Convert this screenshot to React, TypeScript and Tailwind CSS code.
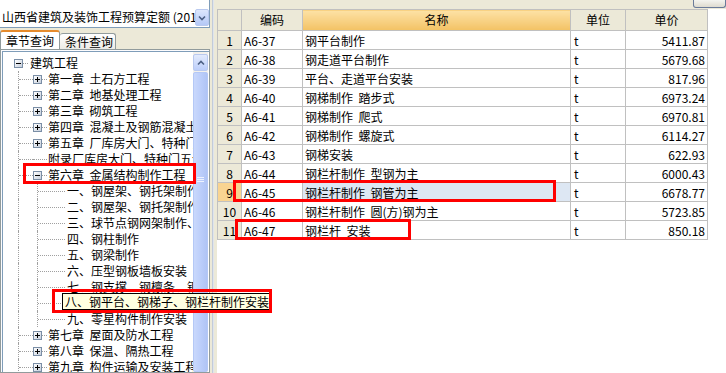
import React from "react";

const FONT = { fontFamily: '"Noto Sans CJK SC", "Liberation Sans", sans-serif' };

type TreeRow = { level: 0 | 1 | 2; text: string; box?: "plus" | "minus" };

const tree: TreeRow[] = [
  { level: 0, text: "建筑工程", box: "minus" },
  { level: 1, text: "第一章  土石方工程", box: "plus" },
  { level: 1, text: "第二章  地基处理工程", box: "plus" },
  { level: 1, text: "第三章  砌筑工程", box: "plus" },
  { level: 1, text: "第四章  混凝土及钢筋混凝土工程", box: "plus" },
  { level: 1, text: "第五章  厂库房大门、特种门、木结构工程", box: "plus" },
  { level: 1, text: "附录厂库房大门、特种门五金" },
  { level: 1, text: "第六章  金属结构制作工程", box: "minus" },
  { level: 2, text: "一、钢屋架、钢托架制作" },
  { level: 2, text: "二、钢屋架、钢托架制作" },
  { level: 2, text: "三、球节点钢网架制作、安装" },
  { level: 2, text: "四、钢柱制作" },
  { level: 2, text: "五、钢梁制作" },
  { level: 2, text: "六、压型钢板墙板安装" },
  { level: 2, text: "七、钢支撑、钢檩条、钢墙架" },
  { level: 2, text: "八、钢平台、钢梯子、钢栏杆制作安装" },
  { level: 2, text: "九、零星构件制作安装" },
  { level: 1, text: "第七章  屋面及防水工程", box: "plus" },
  { level: 1, text: "第八章  保温、隔热工程", box: "plus" },
  { level: 1, text: "第九章  构件运输及安装工程", box: "plus" },
];

const rows = [
  ["A6-37", "钢平台制作", "t", "5411.87"],
  ["A6-38", "钢走道平台制作", "t", "5679.68"],
  ["A6-39", "平台、走道平台安装", "t", "817.96"],
  ["A6-40", "钢梯制作  踏步式", "t", "6973.24"],
  ["A6-41", "钢梯制作  爬式", "t", "6970.81"],
  ["A6-42", "钢梯制作  螺旋式", "t", "6114.27"],
  ["A6-43", "钢梯安装", "t", "622.93"],
  ["A6-44", "钢栏杆制作  型钢为主", "t", "6000.43"],
  ["A6-45", "钢栏杆制作  钢管为主", "t", "6678.77"],
  ["A6-46", "钢栏杆制作  圆(方)钢为主", "t", "5723.85"],
  ["A6-47", "钢栏杆  安装", "t", "850.18"],
];

function Box({ kind }: { kind: "plus" | "minus" }) {
  return (
    <div className="w-[9px] h-[9px] shrink-0 border border-[#7a8ea6] bg-gradient-to-br from-white to-[#c6cfdc] flex items-center justify-center relative">
      <div className="w-[5px] h-px bg-black" />
      {kind === "plus" && <div className="absolute w-px h-[5px] bg-black" />}
    </div>
  );
}

function Dots({ w }: { w: number }) {
  return <div className="border-t border-dotted border-[#a0a0a0] shrink-0" style={{ width: w }} />;
}

function TreeLine({ row }: { row: TreeRow }) {
  if (row.level === 0) {
    return (
      <div className="h-[16px] flex items-center">
        <div className="w-[11px] shrink-0" />
        <Box kind={row.box!} />
        <Dots w={5} />
        <span className="ml-[2px] whitespace-pre">{row.text}</span>
      </div>
    );
  }
  if (row.level === 1) {
    return (
      <div className="h-[16px] flex items-center">
        <div className="w-[15px] shrink-0" />
        <div className="w-[15px] h-full shrink-0 border-l border-dotted border-[#a0a0a0] flex items-center">
          <Dots w={14} />
        </div>
        {row.box ? (
          <>
            <Box kind={row.box} />
            <Dots w={5} />
          </>
        ) : (
          <Dots w={14} />
        )}
        <span className="ml-[1px] whitespace-pre">{row.text}</span>
      </div>
    );
  }
  return (
    <div className="h-[16px] flex items-center">
      <div className="w-[15px] shrink-0" />
      <div className="w-[19px] h-full shrink-0 border-l border-dotted border-[#a0a0a0]" />
      <div className="w-[28px] h-full shrink-0 border-l border-dotted border-[#a0a0a0] flex items-center">
        <Dots w={27} />
      </div>
      <span className="ml-[2px] whitespace-pre">{row.text}</span>
    </div>
  );
}

export default function App() {
  return (
    <div className="w-[726px] h-[373px] relative overflow-hidden bg-[#ece9d8] text-[12px] text-black flex" style={FONT}>
      {/* left: chapter tree */}
      <div className="w-[210px] shrink-0 flex flex-col">
        <div className="h-[28px] bg-white border-b border-r border-[#7f9db9] flex items-end pb-[2px] pl-[2px] relative">
          <span className="whitespace-pre text-[12px] leading-[16px]">山西省建筑及装饰工程预算定额 (201</span>
          <div className="absolute right-[0px] top-[9px] w-[14px] h-[17px] rounded-[2px] border border-[#b9c9ef] bg-gradient-to-b from-[#dde7fd] to-[#b4c8f6] flex items-center justify-center">
            <svg width="8" height="6" viewBox="0 0 8 6">
              <path d="M1 1.5 L4 4.5 L7 1.5" stroke="#4d6185" strokeWidth="1.6" fill="none" />
            </svg>
          </div>
        </div>
        <div className="h-[21px] flex items-end pt-[2px]">
          <div className="h-[19px] w-[60px] bg-white border border-b-0 border-[#919b9c] border-t-2 border-t-[#e68b2c] rounded-t-[3px] flex items-center pl-[5px] text-[12px]">
            章节查询
          </div>
          <div className="h-[16px] w-[56px] bg-gradient-to-b from-white to-[#ecebe6] border border-b-0 border-l-0 border-[#919b9c] rounded-t-[3px] flex items-center pl-[5px]">
            条件查询
          </div>
        </div>
        <div className="flex-1 bg-[#fcfcfe] border border-[#919b9c] flex min-h-0">
          <div className="flex-1 bg-white ml-[1px] mt-[1px] border-l border-t border-[#7f9db9] flex min-h-0">
            <div className="w-[190px] overflow-hidden pt-[3px]">
              {tree.map((r, i) => (
                <TreeLine key={i} row={r} />
              ))}
            </div>
            <div className="w-[15px] shrink-0 flex flex-col bg-[#f3f1ec]">
              <div className="h-[17px] mt-[2px] rounded-[2px] border border-[#b9c9ef] bg-gradient-to-b from-[#e3ebfd] to-[#bccefa] flex items-center justify-center">
                <svg width="8" height="6" viewBox="0 0 8 6">
                  <path d="M1 4.5 L4 1.5 L7 4.5" stroke="#4d6185" strokeWidth="1.6" fill="none" />
                </svg>
              </div>
              <div className="flex-1 mt-px rounded-[2px] border border-[#b4c8f6] bg-gradient-to-r from-[#c9d8fc] via-[#bccefa] to-[#b0c4f5] flex flex-col items-center pt-[104px]">
                <div className="w-[7px] h-px bg-[#eef3fe] mb-[1px]" />
                <div className="w-[7px] h-px bg-[#eef3fe] mb-[1px]" />
                <div className="w-[7px] h-px bg-[#eef3fe]" />
              </div>
            </div>
          </div>
        </div>
      </div>

      {/* splitter */}
      <div className="w-[7px] shrink-0 flex">
        <div className="w-px bg-[#c2cbd9] ml-[2px]" />
        <div className="w-px bg-[#dfe4ec]" />
      </div>

      {/* right: quota table */}
      <div className="flex-1 flex flex-col">
        <div className="h-[9px] flex justify-end">
          <div className="w-[33px] h-[8px] border border-t-0 border-[#6a7b9a] rounded-b-[3px] bg-gradient-to-b from-[#f4f4f0] to-[#dedbcf]" />
        </div>
        <div className="flex-1 bg-white">
          <table className="border-collapse table-fixed" style={{ width: 490 }}>
            <colgroup>
              <col style={{ width: 24 }} />
              <col style={{ width: 61 }} />
              <col style={{ width: 268 }} />
              <col style={{ width: 55 }} />
              <col style={{ width: 82 }} />
            </colgroup>
            <thead>
              <tr className="h-[21px]">
                <th className="border border-[#c0c0c0] bg-[#ece9d8] font-normal" />
                <th className="border border-[#c0c0c0] bg-[#ece9d8] font-normal text-center">编码</th>
                <th className="border border-[#c0c0c0] bg-gradient-to-b from-[#fde2a5] to-[#f3c263] font-normal text-center">名称</th>
                <th className="border border-[#c0c0c0] bg-[#ece9d8] font-normal text-center">单位</th>
                <th className="border border-[#c0c0c0] bg-[#ece9d8] font-normal text-center">单价</th>
              </tr>
            </thead>
            <tbody>
              {rows.map((r, i) => {
                const sel = i === 8;
                return (
                  <tr key={i} className="h-[19px] leading-[17px]">
                    <td className={"border border-[#c0c0c0] text-center " + (sel ? "bg-[#f9d491]" : "bg-[#ece9d8]")}>{i + 1}</td>
                    <td className="border border-[#c0c0c0] pl-[2px] whitespace-nowrap">{r[0]}</td>
                    <td className={"border border-[#c0c0c0] pl-[2px] whitespace-pre " + (sel ? "bg-[#dde7f3]" : "")}>{r[1]}</td>
                    <td className="border border-[#c0c0c0] pl-[3px]">{r[2]}</td>
                    <td className="border border-[#c0c0c0] text-right pr-[2px]">{r[3]}</td>
                  </tr>
                );
              })}
            </tbody>
          </table>
        </div>
      </div>

      {/* tooltip for truncated tree node */}
      <div className="absolute left-[62px] top-[293px] h-[17px] w-[208px] bg-[#ffffe1] border border-black flex items-center pl-[2px] whitespace-nowrap">
        八、钢平台、钢梯子、钢栏杆制作安装
      </div>

      {/* red annotation boxes */}
      <div className="absolute left-[23px] top-[163px] w-[173px] h-[21px] border-[3px] border-[#ff0000]" />
      <div className="absolute left-[52px] top-[289px] w-[220px] h-[24px] border-[3px] border-[#ff0000]" />
      <div className="absolute left-[233px] top-[180px] w-[323px] h-[22px] border-[3px] border-[#ff0000]" />
      <div className="absolute left-[235px] top-[219px] w-[176px] h-[21px] border-[3px] border-[#ff0000]" />
    </div>
  );
}
